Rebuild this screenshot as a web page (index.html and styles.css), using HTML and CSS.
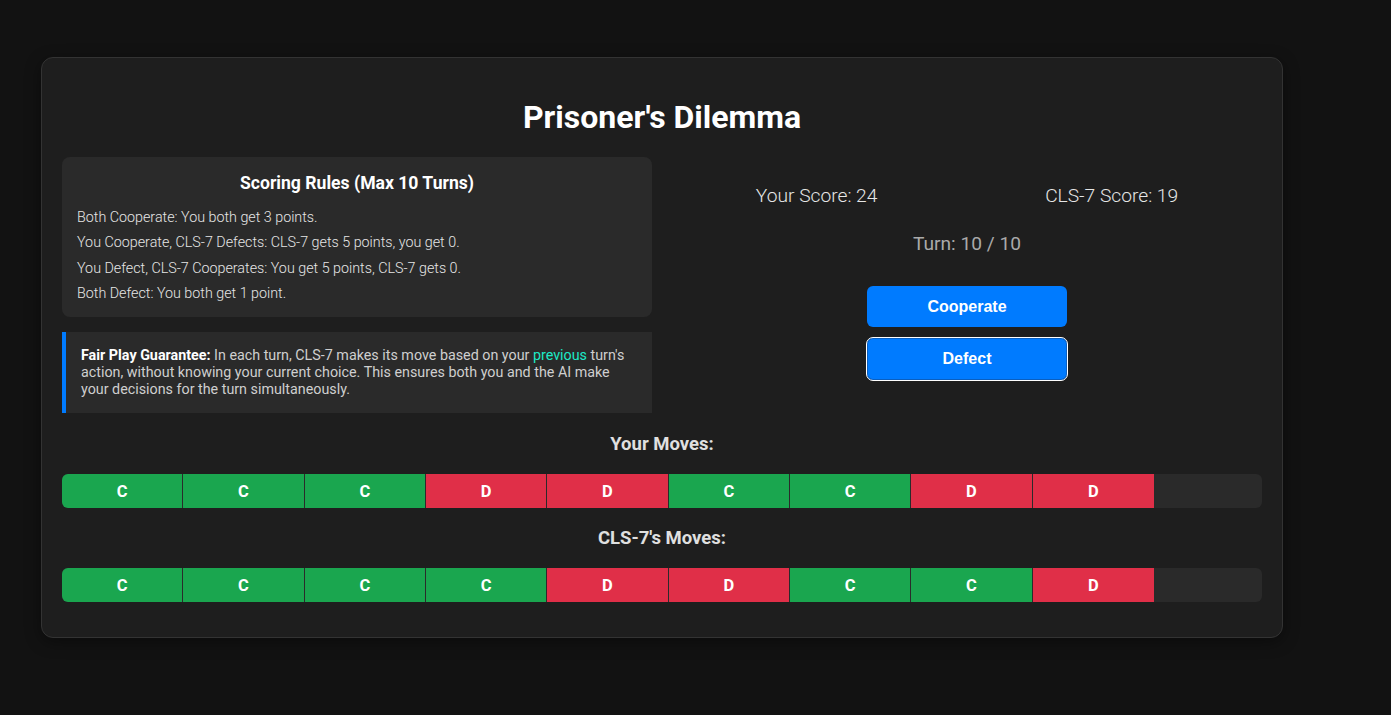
FILE: index.html
```html
<!DOCTYPE html>
<html lang="en">
<head>
<meta charset="utf-8">
<title>Prisoner's Dilemma</title>
<link rel="stylesheet" href="styles.css">
</head>
<body>
<div class="game">
  <h1 class="title">Prisoner's Dilemma</h1>
  <div class="top">
    <div class="left">
      <div class="rules">
        <h3 class="rules-title">Scoring Rules (Max 10 Turns)</h3>
        <p class="rule">Both Cooperate: You both get 3 points.</p>
        <p class="rule">You Cooperate, CLS-7 Defects: CLS-7 gets 5 points, you get 0.</p>
        <p class="rule">You Defect, CLS-7 Cooperates: You get 5 points, CLS-7 gets 0.</p>
        <p class="rule">Both Defect: You both get 1 point.</p>
      </div>
      <p class="fair"><strong>Fair Play Guarantee:</strong> In each turn, CLS-7 makes its move based on your <span class="hl">previous</span> turn's action, without knowing your current choice. This ensures both you and the AI make your decisions for the turn simultaneously.</p>
    </div>
    <div class="right">
      <div class="scores">
        <div class="score">Your Score: 24</div>
        <div class="score">CLS-7 Score: 19</div>
      </div>
      <div class="turn">Turn: 10 / 10</div>
      <div class="buttons">
        <button class="btn">Cooperate</button>
        <button class="btn focused">Defect</button>
      </div>
    </div>
  </div>
  <h3 class="moves-title">Your Moves:</h3>
  <div class="bar">
    <div class="cell c">C</div><div class="cell c">C</div><div class="cell c">C</div><div class="cell d">D</div><div class="cell d">D</div><div class="cell c">C</div><div class="cell c">C</div><div class="cell d">D</div><div class="cell d last">D</div>
  </div>
  <h3 class="moves-title">CLS-7's Moves:</h3>
  <div class="bar">
    <div class="cell c">C</div><div class="cell c">C</div><div class="cell c">C</div><div class="cell c">C</div><div class="cell d">D</div><div class="cell d">D</div><div class="cell c">C</div><div class="cell c">C</div><div class="cell d last">D</div>
  </div>
</div>
</body>
</html>
```
FILE: styles.css
```css
html, body {
  margin: 0;
  padding: 0;
}
body {
  background: #121212;
  font-family: Roboto, "Liberation Sans", Arial, sans-serif;
  color: #e0e0e0;
  min-height: 715px;
}
.game {
  box-sizing: border-box;
  width: 1242px;
  margin: 57px 0 0 41px;
  padding: 20px;
  background: #1e1e1e;
  border: 1px solid #333;
  border-radius: 12px;
  box-shadow: 0 4px 16px rgba(0,0,0,0.4);
}
.title {
  margin: 20px 0 21px;
  font-size: 32px;
  line-height: 38px;
  font-weight: 700;
  color: #fff;
  text-align: center;
}
.top {
  display: grid;
  grid-template-columns: 1fr 1fr;
  gap: 20px;
}
.rules {
  background: #2a2a2a;
  border-radius: 8px;
  padding: 15px 15px 12px;
}
.rules-title {
  margin: 0 0 10px;
  font-size: 17.6px;
  line-height: 22px;
  font-weight: 700;
  color: #fff;
  text-align: center;
}
.rule {
  margin: 0;
  font-size: 14.3px;
  line-height: 25.33px;
  font-weight: 300;
  color: #e6e6e6;
  padding-top: 1px;
  margin-bottom: -1px;
}
.fair {
  margin: 15px 0 0;
  background: #2a2a2a;
  border-left: 4px solid #007bff;
  padding: 15px 24px 15px 15px;
  font-size: 14.3px;
  line-height: 17px;
  color: #cfcfcf;
}
.fair strong {
  color: #fff;
}
.hl {
  color: #1de9c6;
}
.right {
  display: flex;
  flex-direction: column;
  align-items: center;
  padding-top: 28px;
}
.scores {
  align-self: stretch;
  display: flex;
  justify-content: space-around;
  font-size: 19.2px;
  line-height: 22px;
  font-weight: 300;
  color: #e6e6e6;
}
.turn {
  margin-top: 26px;
  font-size: 19.2px;
  line-height: 22px;
  font-weight: 400;
  color: #aaa;
}
.buttons {
  margin-top: 31px;
  display: flex;
  flex-direction: column;
  align-items: center;
  gap: 11px;
}
.btn {
  width: 200px;
  height: 41px;
  border: none;
  border-radius: 6px;
  background: #007bff;
  color: #fff;
  font-family: "Liberation Sans", Arial, sans-serif;
  font-size: 16px;
  font-weight: 700;
  cursor: pointer;
}
.btn.focused {
  height: 42px;
  outline: 1px solid #ffffff;
  outline-offset: 0;
  box-shadow: inset 0 0 0 1px #0a5fc0;
}
.moves-title {
  margin: 20px 0 19px;
  font-size: 18.5px;
  line-height: 22px;
  font-weight: 700;
  color: #e0e0e0;
  text-align: center;
}
.bar {
  display: flex;
  height: 34px;
  border-radius: 6px;
  overflow: hidden;
  background: #2a2a2a;
  margin-bottom: 15px;
}
.bar + .moves-title {
  margin-top: 19px;
}
.cell {
  box-sizing: border-box;
  width: 121.33px;
  flex: 0 0 auto;
  display: flex;
  align-items: center;
  justify-content: center;
  font-size: 16.5px;
  font-weight: 700;
  color: #fff;
  border-right: 1px solid #2b2b2b;
}
.cell.c {
  background: #1aa64f;
}
.cell.d {
  background: #e02f48;
}
.cell.last {
  border-right: none;
}
```
